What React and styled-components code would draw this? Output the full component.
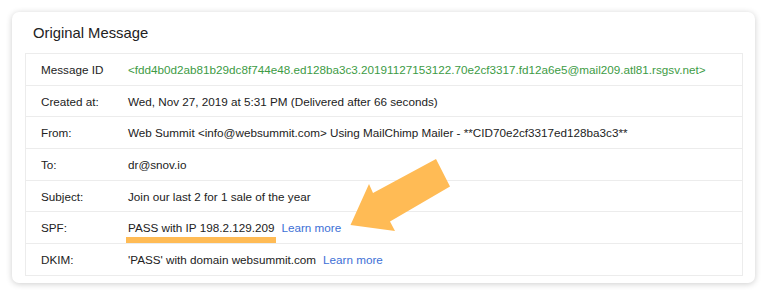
import React from "react";
import styled, { createGlobalStyle } from "styled-components";

const GlobalStyle = createGlobalStyle`
  html, body {
    margin: 0;
    padding: 0;
    background: #fff;
  }
  body {
    font-family: "Liberation Sans", Arial, sans-serif;
    color: #222;
  }
`;

const rows = [
    {
        label: "Message ID",
        value: "<fdd4b0d2ab81b29dc8f744e48.ed128ba3c3.20191127153122.70e2cf3317.fd12a6e5@mail209.atl81.rsgsv.net>",
        tone: "green",
    },
    { label: "Created at:", value: "Wed, Nov 27, 2019 at 5:31 PM (Delivered after 66 seconds)" },
    {
        label: "From:",
        value: "Web Summit <info@websummit.com> Using MailChimp Mailer - **CID70e2cf3317ed128ba3c3**",
    },
    { label: "To:", value: "dr@snov.io" },
    { label: "Subject:", value: "Join our last 2 for 1 sale of the year" },
    { label: "SPF:", value: "PASS with IP 198.2.129.209", link: true, marked: true },
    { label: "DKIM:", value: "'PASS' with domain websummit.com", link: true },
];

function App() {
    return (
        <Page>
            <GlobalStyle />
            <Card>
                <Title>Original Message</Title>
                <Table>
                    {rows.map((r) => (
                        <Row key={r.label}>
                            <Label>{r.label}</Label>
                            <Value tone={r.tone}>
                                {r.marked ? <Marked>{r.value}</Marked> : r.value}
                                {r.link && <LearnMore href="#">Learn more</LearnMore>}
                            </Value>
                        </Row>
                    ))}
                </Table>
            </Card>
            <Arrow viewBox="0 0 768 295" aria-hidden="true">
                <polygon
                    points="350.5,225 369,184 373,193 436,159 450,186.5 390,221.5 395,231"
                    fill="#ffbb55"
                />
            </Arrow>
        </Page>
    );
}

export default App;

const Page = styled.div`
    position: relative;
    width: 768px;
    height: 295px;
    padding: 12px 13px 0 12px;
    box-sizing: border-box;
`;
const Card = styled.div`
    background: #fff;
    border-radius: 7px;
    box-shadow: 0 1px 6px rgba(0, 0, 0, 0.2);
    padding: 0 12px 8px 13px;
    height: 271px;
    box-sizing: border-box;
`;
const Title = styled.h4`
    margin: 0;
    height: 41px;
    display: flex;
    align-items: center;
    padding: 0 0 0 8px;
    font-size: 14.8px;
    font-weight: normal;
    color: #222;
`;
const Table = styled.div`
    border: 1px solid #ececec;
    border-top: none;
`;
const Row = styled.div`
    display: grid;
    grid-template-columns: 102px 1fr;
    align-items: center;
    height: 30.7px;
    border-top: 1px solid #ececec;
    font-size: 11.7px;
`;
const Label = styled.div`
    padding-left: 15px;
    color: #222;
`;
const Value = styled.div`
    white-space: nowrap;
    color: ${(p) => (p.tone === "green" ? "#3d9b45" : "#222")};
`;
const Marked = styled.span`
    position: relative;
    &::after {
        content: "";
        position: absolute;
        left: -2px;
        right: -2px;
        bottom: -9px;
        height: 6px;
        background: #ffbb55;
    }
`;
const LearnMore = styled.a`
    margin-left: 7px;
    color: #3d6fd6;
    text-decoration: none;
`;
const Arrow = styled.svg`
    position: absolute;
    left: 0;
    top: 0;
    width: 768px;
    height: 295px;
    pointer-events: none;
`;
